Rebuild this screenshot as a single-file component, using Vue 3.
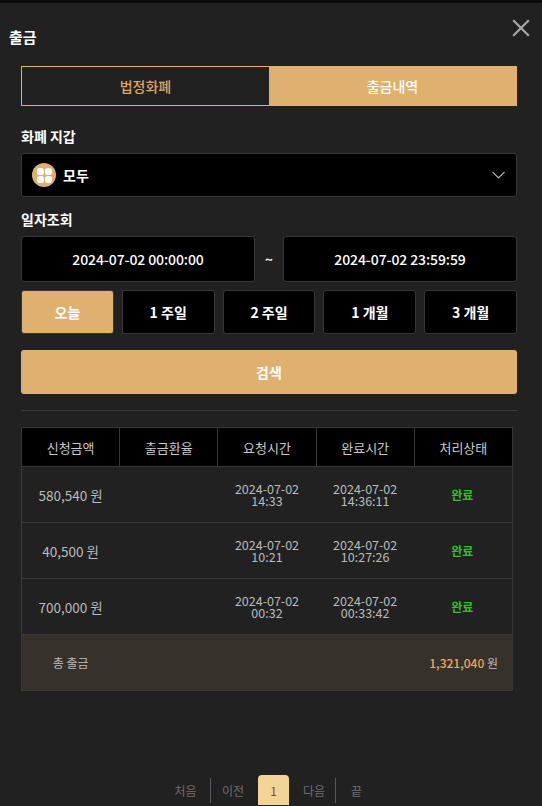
<script setup>
const presets = ['오늘', '1 주일', '2 주일', '1 개월', '3 개월']
const heads = ['신청금액', '출금환율', '요청시간', '완료시간', '처리상태']
const rows = [
  { amount: '580,540 원', req: ['2024-07-02', '14:33'], done: ['2024-07-02', '14:36:11'] },
  { amount: '40,500 원', req: ['2024-07-02', '10:21'], done: ['2024-07-02', '10:27:26'] },
  { amount: '700,000 원', req: ['2024-07-02', '00:32'], done: ['2024-07-02', '00:33:42'] },
]
</script>

<template>
  <div class="page">
    <div class="topbar"></div>
    <header class="head">
      <h1>출금</h1>
      <svg class="close" width="18" height="18" viewBox="0 0 18 18">
        <path d="M1.2 1.2L16.8 16.8M16.8 1.2L1.2 16.8" stroke="#a8a8a8" stroke-width="2.2" fill="none" />
      </svg>
    </header>
    <main class="body">
      <div class="tabs">
        <div class="tab">법정화폐</div>
        <div class="tab on">출금내역</div>
      </div>
      <div class="label first">화폐 지갑</div>
      <div class="select">
        <span class="coin"><i></i><i></i><i></i><i></i></span>
        <span class="coin-name">모두</span>
        <svg class="chev" width="13" height="8" viewBox="0 0 13 8">
          <path d="M.5.8L6.5 6.8L12.5.8" stroke="#b5b5b5" stroke-width="1.2" fill="none" />
        </svg>
      </div>
      <div class="label second">일자조회</div>
      <div class="dates">
        <div class="date">2024-07-02 00:00:00</div>
        <span class="tilde">~</span>
        <div class="date">2024-07-02 23:59:59</div>
      </div>
      <div class="presets">
        <div v-for="(p, i) in presets" :key="p" class="preset" :class="{ on: i === 0 }">{{ p }}</div>
      </div>
      <div class="search">검색</div>
      <div class="rule"></div>
      <table class="grid">
        <thead>
          <tr><th v-for="h in heads" :key="h">{{ h }}</th></tr>
        </thead>
        <tbody>
          <tr v-for="r in rows" :key="r.amount">
            <td class="amt">{{ r.amount }}</td>
            <td></td>
            <td class="time">{{ r.req[0] }}<br />{{ r.req[1] }}</td>
            <td class="time">{{ r.done[0] }}<br />{{ r.done[1] }}</td>
            <td class="ok">완료</td>
          </tr>
          <tr class="total">
            <td class="total-name">총 출금</td>
            <td colspan="4" class="total-val"><b>1,321,040</b> 원</td>
          </tr>
        </tbody>
      </table>
      <nav class="pager">
        <span class="pg w1">처음</span>
        <span class="bar"></span>
        <span class="pg w2">이전</span>
        <span class="cur">1</span>
        <span class="pg w3">다음</span>
        <span class="bar"></span>
        <span class="pg w4">끝</span>
      </nav>
    </main>
  </div>
</template>

<style scoped>
.page {
  width: 542px;
  height: 806px;
  overflow: hidden;
  background: #212121;
  color: #fff;
  font-family: "Noto Sans CJK KR", "Noto Sans", sans-serif;
}
.topbar {
  height: 3px;
  background: #0b0b0b;
}
.head {
  display: flex;
  justify-content: space-between;
  height: 63px;
  padding: 16px 12px 0 9px;
  box-sizing: border-box;
}
.head h1 {
  margin: 7px 0 0;
  font-size: 15px;
  line-height: 22px;
  font-weight: 700;
}
.body {
  padding: 0 25px 0 21px;
}
.tabs {
  display: flex;
  height: 40px;
  border: 1px solid #e0b06f;
  box-sizing: border-box;
}
.tab {
  flex: 1;
  display: flex;
  align-items: center;
  justify-content: center;
  font-size: 14px;
  font-weight: 500;
  color: #e0a565;
}
.tab.on {
  background: #e0b06f;
  color: #fff;
}
.label {
  font-size: 14px;
  line-height: 20px;
  font-weight: 700;
}
.label.first {
  margin-top: 20px;
}
.label.second {
  margin-top: 12px;
}
.select {
  display: flex;
  align-items: center;
  height: 44px;
  margin-top: 7px;
  padding: 0 11px 0 10px;
  box-sizing: border-box;
  background: #000;
  border: 1px solid #383838;
  border-radius: 3px;
}
.coin {
  display: grid;
  grid-template-columns: 7px 7px;
  grid-auto-rows: 7px;
  gap: 1px;
  align-content: center;
  justify-content: center;
  width: 24px;
  height: 24px;
  border-radius: 50%;
  background: #e0b06f;
}
.coin i {
  background: #fff;
  border-radius: 40%;
}
.coin-name {
  margin-left: 7px;
  font-size: 14px;
  font-weight: 700;
}
.chev {
  margin-left: auto;
}
.dates {
  display: flex;
  align-items: center;
  margin-top: 7px;
}
.date {
  flex: 1;
  height: 46px;
  display: flex;
  align-items: center;
  justify-content: center;
  box-sizing: border-box;
  background: #000;
  border: 1px solid #383838;
  border-radius: 3px;
  font-size: 14px;
  font-weight: 500;
  letter-spacing: -0.1px;
}
.tilde {
  width: 28px;
  text-align: center;
  font-size: 14px;
  font-weight: 700;
  color: #ddd;
}
.presets {
  display: flex;
  gap: 8px;
  margin-top: 8px;
}
.preset {
  flex: 1;
  height: 44px;
  display: flex;
  align-items: center;
  justify-content: center;
  box-sizing: border-box;
  background: #000;
  border: 1px solid #383838;
  border-radius: 3px;
  font-size: 14px;
  font-weight: 700;
}
.preset.on {
  background: #e0b06f;
}
.search {
  height: 44px;
  margin-top: 16px;
  display: flex;
  align-items: center;
  justify-content: center;
  background: #e0b06f;
  border-radius: 3px;
  font-size: 14px;
  font-weight: 700;
}
.rule {
  height: 1px;
  margin-top: 16px;
  background: #3a3a3a;
}
.grid {
  width: 492px;
  margin-top: 16px;
  border-collapse: collapse;
  table-layout: fixed;
}
.grid th,
.grid td {
  border: 1px solid #383838;
  padding: 0;
  text-align: center;
  vertical-align: middle;
}
.grid th {
  height: 38px;
  background: #000;
  color: #c9c9c9;
  font-size: 13px;
  font-weight: 400;
}
.grid td {
  height: 55px;
  color: #bbb;
  font-size: 13.5px;
}
.grid tbody tr:not(.total) td {
  border-left-color: transparent;
  border-right-color: transparent;
}
.grid tbody tr:not(.total) td:first-child {
  border-left-color: #383838;
}
.grid tbody tr:not(.total) td:last-child {
  border-right-color: #383838;
}
.grid td.time {
  font-size: 12.5px;
  line-height: 12px;
}
.grid td.ok {
  color: #2fc41f;
  font-size: 12px;
  font-weight: 700;
  padding-right: 2px;
}
.total td {
  background: #37312b;
}
.grid td.total-name {
  font-size: 12px;
  border-right-color: transparent;
}
.grid td.total-val {
  text-align: right;
  padding-right: 14px;
  border-left-color: transparent;
  font-size: 12px;
}
.total-val b {
  color: #eea85c;
  font-weight: 500;
}
.pager {
  display: flex;
  align-items: center;
  justify-content: center;
  height: 30px;
  margin-top: 84px;
  font-size: 12px;
  color: #6f6f6f;
}
.pg {
  text-align: center;
  box-sizing: border-box;
}
.w1 { width: 49px; }
.w2 { width: 47px; padding-right: 3px; }
.w3 { width: 46px; padding-left: 4px; }
.w4 { width: 41px; }
.bar {
  width: 1px;
  height: 25px;
  background: #5a5a5a;
}
.cur {
  width: 31px;
  height: 30px;
  flex-shrink: 0;
  display: flex;
  align-items: center;
  justify-content: center;
  background: #f3d497;
  border-radius: 4px 4px 0 0;
  color: #8a4b2c;
}
</style>
